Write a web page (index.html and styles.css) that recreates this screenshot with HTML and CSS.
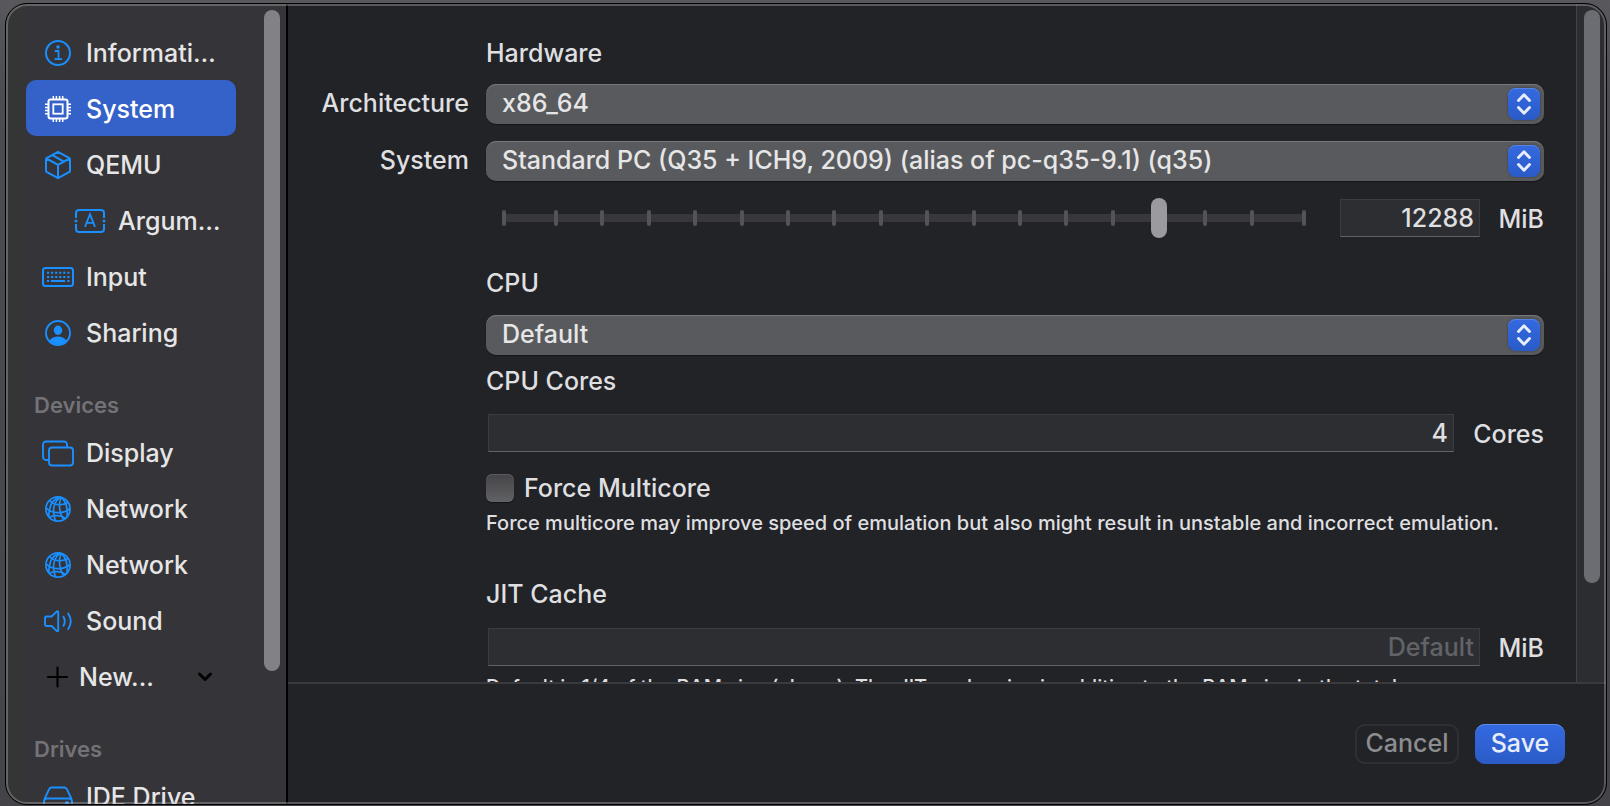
FILE: index.html
```html
<!DOCTYPE html>
<html lang="en">
<head>
<meta charset="utf-8">
<title>Virtual machine settings</title>
<link rel="stylesheet" href="styles.css">
</head>
<body>
<svg class="defs" aria-hidden="true">
  <symbol id="globe" viewBox="0 0 32 32">
    <g fill="none" stroke="currentColor" stroke-width="1.700">
      <circle cx="16" cy="16" r="12.100"/>
      <path d="M18.500 4.200C12 8 9.500 17 13.500 27.800M19 4.200C16.500 11 17 20 21.500 26.500M19 4.200C24 8 26 14 25 23.800M18.500 4.200C11 5.500 7 12 6.800 23.500"/>
      <path d="M7.500 7.500C12 12.500 20 13 26.200 9.500M4 14.500C9 21 21 21.500 28 15.500M7.500 24.200C12 21.500 20 22.500 23.500 25.500"/>
    </g>
  </symbol>
  <symbol id="updown" viewBox="0 0 32 32">
    <path d="M10.500 12.500L16 6.800l5.500 5.700M10.500 19.500L16 25.200l5.500-5.700" fill="none" stroke="currentColor" stroke-width="2.900" stroke-linecap="round" stroke-linejoin="round"/>
  </symbol>
</svg>
<div class="window">
  <aside class="sidebar">
    <nav class="nav">
      <a class="item" href="#"><svg class="icon" viewBox="0 0 32 32"><g fill="none" stroke="currentColor" stroke-width="2"><circle cx="16" cy="16" r="12"/><path d="M12.800 14h3.700v8M12.500 22.200h7.600" stroke-width="1.800"/></g><circle cx="16" cy="10" r="1.800" fill="currentColor"/></svg><span class="text">Information</span></a>
      <a class="item selected" href="#" aria-current="page"><svg class="icon" viewBox="0 0 32 32" fill="none" stroke="currentColor" stroke-width="2"><rect x="6.500" y="6.500" width="19" height="19" rx="2"/><rect x="11.300" y="11.300" width="9.400" height="9.400" stroke-width="1.800"/><path d="M11.300 3v3.500M14.400 3v3.500M17.600 3v3.500M20.700 3v3.500M11.300 25.500v3.500M14.400 25.500v3.500M17.600 25.500v3.500M20.700 25.500v3.500M3 11.300h3.500M3 14.400h3.500M3 17.600h3.500M3 20.700h3.500M25.500 11.300h3.500M25.500 14.400h3.500M25.500 17.600h3.500M25.500 20.700h3.500" stroke-width="1.500"/></svg><span class="text">System</span></a>
      <a class="item" href="#"><svg class="icon" viewBox="0 0 32 32" fill="none" stroke="currentColor" stroke-width="2" stroke-linejoin="round"><path d="M16 2.800l11 6a1.500 1.500 0 0 1 1 1.500v11.400a1.500 1.500 0 0 1-1 1.500l-11 6-11-6a1.500 1.500 0 0 1-1-1.500V10.300a1.500 1.500 0 0 1 1-1.500zM4.500 9.500L16 15.800l11.500-6.300M16 15.800v13"/><path d="M10.200 6l11.600 6.600" stroke-width="2.200"/></svg><span class="text">QEMU</span></a>
      <a class="item nested" href="#"><svg class="icon" viewBox="0 0 32 32" fill="none" stroke="currentColor" stroke-width="2"><path d="M2 13V8a3 3 0 0 1 3-3h22a3 3 0 0 1 3 3v5M2 19v5a3 3 0 0 0 3 3h22a3 3 0 0 0 3-3v-5"/><path d="M11 21.800l5-12.600 5 12.600M12.700 17.800h6.600" stroke-width="1.800"/><circle cx="2" cy="16" r=".600"/><circle cx="30" cy="16" r=".600"/></svg><span class="text">Arguments</span></a>
      <a class="item" href="#"><svg class="icon" viewBox="0 0 32 32" fill="none" stroke="currentColor" stroke-width="2"><rect x="1" y="7" width="30" height="18" rx="2.500"/><path d="M5 11.800h22.500M5 15.900h22.500" stroke-dasharray="2.200 1.860"/><path d="M5 20h2.200M9 20h14M25.300 20h2.200"/></svg><span class="text">Input</span></a>
      <a class="item" href="#"><svg class="icon" viewBox="0 0 32 32"><circle cx="16" cy="16" r="12" fill="none" stroke="currentColor" stroke-width="1.900"/><ellipse cx="16" cy="13.200" rx="4.200" ry="4.700" fill="currentColor"/><path d="M7.500 23.500c2-2.800 5-4 8.500-4s6.500 1.200 8.500 4A12.500 12.500 0 0 1 16 28a12.500 12.500 0 0 1-8.500-4.500z" fill="currentColor"/></svg><span class="text">Sharing</span></a>
      <h2 class="group">Devices</h2>
      <a class="item" href="#"><svg class="icon" viewBox="0 0 32 32" fill="none" stroke="currentColor" stroke-width="1.900"><path d="M7 23H4a3 3 0 0 1-3-3V7.500a3 3 0 0 1 3-3h18a3 3 0 0 1 3 3v2.500"/><rect x="7" y="10.500" width="24" height="18" rx="3"/></svg><span class="text">Display</span></a>
      <a class="item" href="#"><svg class="icon"><use href="#globe"/></svg><span class="text">Network</span></a>
      <a class="item" href="#"><svg class="icon"><use href="#globe"/></svg><span class="text">Network</span></a>
      <a class="item" href="#"><svg class="icon" viewBox="0 0 32 32" fill="none" stroke="currentColor" stroke-width="1.900" stroke-linecap="round" stroke-linejoin="round"><path d="M16.200 7v18.500a.8.800 0 0 1-1.300.6L9.500 21H4.500a1.500 1.500 0 0 1-1.500-1.500v-6.500a1.500 1.500 0 0 1 1.500-1.500h5l5.400-5.100a.8.800 0 0 1 1.300.6zM21.500 11.700c1.600 2.800 1.600 6.200 0 9M26.200 8.500c3.300 5 3.300 10.500 0 15.500"/></svg><span class="text">Sound</span></a>
      <button class="item new" type="button"><svg class="icon" viewBox="0 0 32 32" fill="none" stroke="currentColor" stroke-width="2.100" stroke-linecap="round"><path d="M16.500 6.500v19M7 16h19"/></svg><span class="text">New...</span><svg class="chevron" viewBox="0 0 16 16" fill="none" stroke="currentColor" stroke-width="3" stroke-linecap="round" stroke-linejoin="round"><path d="M2.500 5L8 10.500 13.500 5"/></svg></button>
      <h2 class="group">Drives</h2>
      <a class="item" href="#"><svg class="icon" viewBox="0 0 32 32" fill="none" stroke="currentColor" stroke-width="1.900"><path d="M2.500 18L7 8.500a3 3 0 0 1 2.500-2h13a3 3 0 0 1 2.500 2L29.500 18"/><rect x="2" y="17.500" width="28" height="9" rx="3"/><circle cx="25" cy="22" r="1" fill="currentColor"/></svg><span class="text">IDE Drive</span></a>
    </nav>
    <div class="gutter"><div class="thumb"></div></div>
  </aside>
  <main class="main">
    <div class="scroller">
      <form class="form" id="settings">
        <h1 class="heading hardware">Hardware</h1>
        <div class="row">
          <label class="label" for="arch">Architecture</label>
          <div class="popup"><select class="select" id="arch"><option>x86_64</option></select><svg class="arrows"><use href="#updown"/></svg></div>
        </div>
        <div class="row">
          <label class="label" for="system">System</label>
          <div class="popup"><select class="select" id="system"><option>Standard PC (Q35 + ICH9, 2009) (alias of pc-q35-9.1) (q35)</option></select><svg class="arrows"><use href="#updown"/></svg></div>
        </div>
        <div class="row controls">
          <div class="slider">
            <div class="ticks"><i></i><div class="inner"><i></i><i></i><i></i><i></i><i></i><i></i><i></i><i></i><i></i><i></i><i></i><i></i><i></i><i></i><i></i><i></i></div><i></i></div>
            <input class="range" type="range" min="0" max="17" value="14" aria-label="Memory">
          </div>
          <input class="field memory" id="memory" type="text" value="12288">
          <label class="unit" for="memory">MiB</label>
        </div>
        <h2 class="heading cpu"><label for="cpu">CPU</label></h2>
        <div class="row"><div class="popup"><select class="select" id="cpu"><option>Default</option></select><svg class="arrows"><use href="#updown"/></svg></div></div>
        <h2 class="heading cores">CPU Cores</h2>
        <div class="row controls">
          <input class="field" id="cores" type="text" value="4">
          <label class="unit wide" for="cores">Cores</label>
        </div>
        <label class="check"><input class="box" type="checkbox"><span>Force Multicore</span></label>
        <p class="note">Force multicore may improve speed of emulation but also might result in unstable and incorrect emulation.</p>
        <h2 class="heading cache">JIT Cache</h2>
        <div class="row controls">
          <input class="field" id="cache" type="text" placeholder="Default">
          <label class="unit" for="cache">MiB</label>
        </div>
        <p class="note">Default is 1/4 of the RAM size (above). The JIT cache size is additive to the RAM size in the total<br>memory usage!</p>
      </form>
      <div class="track"><div class="thumb"></div></div>
    </div>
    <footer class="footer">
      <button class="button cancel" type="button">Cancel</button>
      <button class="button save" type="submit" form="settings">Save</button>
    </footer>
  </main>
</div>
</body>
</html>
```
FILE: styles.css
```css
* { box-sizing: border-box; }

body {
  margin: 0;
  height: 100vh;
  padding: 3px 3px 1px 5px;
  overflow: hidden;
  background: linear-gradient(#59585c, #4c4b50 12%, #444348);
  color: #dfdfe0;
  font: 500 25px/30px Inter, "Liberation Sans", sans-serif;
}

h1, h2, p { margin: 0; font-size: inherit; font-weight: inherit; }
input, select, button { font: inherit; color: inherit; margin: 0; }

.defs { position: absolute; width: 0; height: 0; }

.window {
  position: relative;
  display: flex;
  height: 100%;
  overflow: hidden;
  border: 1px solid #000;
  border-radius: 22px;
  background: #222327;
}
.window::after {
  content: "";
  position: absolute;
  inset: 0;
  border: 2px solid rgba(190, 190, 195, .35);
  border-radius: 21px;
  pointer-events: none;
}

.sidebar {
  flex: none;
  display: flex;
  width: 282px;
  overflow: hidden;
  border-right: 2px solid #000;
  background: linear-gradient(90deg, #343636 15px, #353438 17px);
}
.nav { flex: 1; min-width: 0; padding: 20px 28px 0 20px; }
.gutter { width: 22px; padding: 6px 6px 0 0; }
.thumb { width: 16px; border-radius: 8px; background: #828185; }
.gutter .thumb { height: 661px; max-height: 90%; }

.item {
  display: flex;
  align-items: center;
  gap: 12px;
  width: 100%;
  height: 56px;
  padding: 2px 16px 0;
  border: 0;
  border-radius: 10px;
  background: none;
  color: #e6e6e7;
  text-align: left;
  text-decoration: none;
}
.text { flex: 1; min-width: 0; overflow: hidden; text-overflow: ellipsis; white-space: nowrap; }
.icon { flex: none; width: 32px; height: 32px; color: #1a8fff; }
.selected { background: #3562c9; color: #fff; }
.selected .icon { color: #fff; }
.nested { padding-left: 48px; padding-right: 12px; }
.new { gap: 6px; padding-left: 15px; }
.new .icon, .chevron { color: #000; }
.chevron { flex: none; width: 16px; height: 16px; margin-right: 7px; }
.group {
  height: 64px;
  padding: 30px 8px 0;
  color: #737277;
  font-size: 22px;
  font-weight: 600;
}

.main { flex: 1; min-width: 0; display: flex; flex-direction: column; }
.scroller { flex: 1; min-height: 0; display: flex; overflow: hidden; border-bottom: 2px solid #3a3a3e; }
.form { flex: 1; min-width: 0; padding: 33px 32px 0 198px; }
.track { flex: none; width: 30px; padding: 6px 0 0 7px; border-left: 1px solid #424347; background: #2c2d31; }
.track .thumb { height: 573px; max-height: 90%; background: #6c6d72; }

.heading { height: 30px; }
.heading.hardware { line-height: 32px; }
.heading.cpu { margin-top: 30px; }
.heading.cores { margin-top: 11px; }
.heading.cache { margin-top: 45px; line-height: 28px; }
.row { position: relative; display: flex; align-items: center; height: 40px; margin-top: 17px; }
.label {
  position: absolute;
  right: 100%;
  margin-right: 17px;
  padding-bottom: 2px;
}

.popup { position: relative; flex: 1; min-width: 0; height: 40px; }
.select {
  width: 100%;
  height: 40px;
  padding: 0 48px 3px 16px;
  appearance: none;
  border: 0;
  border-radius: 10px;
  background: #595a5d;
  box-shadow: inset 0 1px #77777a, 0 1px 1px #151619;
  color: #e6e6e7;
}
.arrows {
  position: absolute;
  top: 4px;
  right: 4px;
  width: 32px;
  height: 32px;
  border-radius: 8px;
  background: linear-gradient(#3469e0, #2a5bc7);
  box-shadow: inset 0 1px #5484e8, 0 0 2px #333;
  color: #e8edfa;
  pointer-events: none;
}

.slider { position: relative; flex: 1; height: 40px; margin: 0 34px 0 16px; }
.ticks {
  position: absolute;
  inset: 12px 0;
  display: flex;
  background: linear-gradient(#38373c, #38373c) center / 100% 8px no-repeat;
}
.inner { flex: 1; display: flex; justify-content: space-between; margin: 0 48px; }
.ticks i { width: 4px; border-radius: 2px; background: #535458; }
.range {
  position: absolute;
  inset: 0;
  width: 100%;
  height: 40px;
  appearance: none;
  background: none;
}
.range::-webkit-slider-thumb {
  appearance: none;
  width: 16px;
  height: 40px;
  border-radius: 8px;
  background: #9b9a9e;
}

.field {
  flex: 1;
  min-width: 0;
  height: 38px;
  margin-left: 2px;
  padding: 0 5px;
  border: 1px solid #3b3c40;
  border-bottom-color: #626367;
  border-radius: 0;
  background: #2d2e32;
  text-align: right;
}
.field::placeholder { color: #626367; opacity: 1; }
.memory { flex: 0 0 140px; margin-left: 0; }
.unit { flex: none; width: 64px; padding-top: 2px; text-align: right; }
.unit.wide { width: 90px; }

.check { display: flex; align-items: center; gap: 10px; margin-top: 20px; }
.box {
  appearance: none;
  width: 28px;
  height: 28px;
  border-radius: 6px;
  background: linear-gradient(#454448, #616265);
  box-shadow: inset 0 1px #5b5b5f, 0 1px 1px #151619;
}
.note { margin-top: 8px; font-size: 20px; line-height: 24px; }

.footer { flex: none; display: flex; justify-content: flex-end; gap: 16px; padding: 40px 41px; }
.button { height: 40px; padding: 0 0 3px; border: 0; border-radius: 10px; }
.cancel { width: 104px; background: none; border: 2px solid #2f3034; color: #8d8d90; }
.save { width: 90px; background: linear-gradient(#3469e0, #2a5bc7); box-shadow: inset 0 1px #5f8dea; color: #e8edfa; }
```
